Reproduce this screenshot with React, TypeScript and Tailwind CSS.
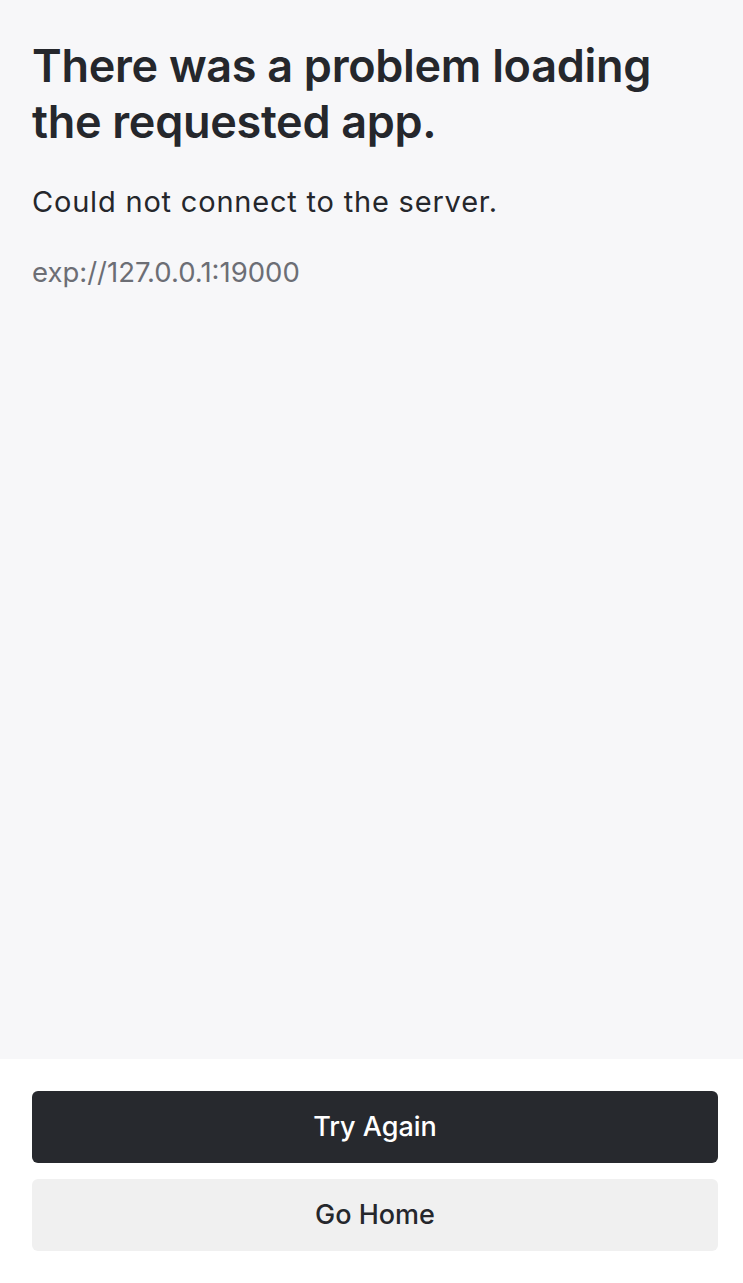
import React from 'react'

const App = () => {
  return (
    <div className="flex flex-col h-[1283px] w-full bg-[#f7f7f9] font-['Inter','Liberation_Sans',sans-serif] text-[#25272c]">
      <div className="flex-1 pl-8 pr-[25px] pt-[38px]">
        <h1 className="text-[45px] leading-[56px] font-semibold tracking-[-0.3px]">
          There was a problem loading the requested app.
        </h1>
        <p className="mt-[34px] text-[29px] leading-[36px] tracking-[0.8px]">Could not connect to the server.</p>
        <p className="mt-[36px] text-[27.5px] leading-[32px] text-[#6c6e75]">exp://127.0.0.1:19000</p>
      </div>

      <div className="bg-white pl-8 pr-[25px] pt-8 pb-8 flex flex-col gap-4">
        <button className="h-[72px] w-full rounded-md bg-[#27292e] text-white text-[27px] font-medium">
          Try Again
        </button>
        <button className="h-[72px] w-full rounded-md bg-[#f0f0f0] text-[#25272c] text-[27px] font-medium">
          Go Home
        </button>
      </div>
    </div>
  )
}

export default App
